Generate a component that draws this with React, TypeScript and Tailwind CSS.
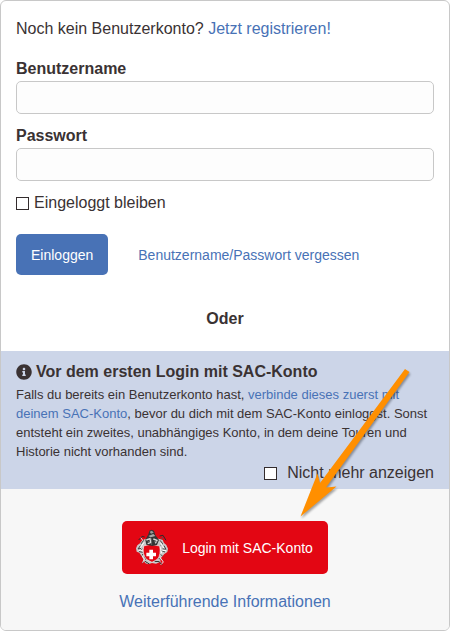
import type { ReactNode } from "react";
import { FaInfoCircle } from "react-icons/fa";

type TextFieldProps = {
  readonly id: string;
  readonly label: string;
  readonly type: "text" | "password";
};

function TextField({ id, label, type }: TextFieldProps) {
  return (
    <div className="flex flex-col">
      <label htmlFor={id} className="font-bold">
        {label}
      </label>
      <input
        id={id}
        type={type}
        className="h-[33px] w-full rounded-[5px] border border-[#c8c8c8] bg-[#fdfdfd] px-3"
      />
    </div>
  );
}

type CheckboxProps = {
  readonly id: string;
  readonly className: string;
  readonly children: ReactNode;
};

function Checkbox({ id, className, children }: CheckboxProps) {
  return (
    <div className={`flex items-center ${className}`}>
      <input
        id={id}
        type="checkbox"
        className="size-[13px] shrink-0 appearance-none border border-[#332c2d] bg-white checked:bg-[#4872b6]"
      />
      <label htmlFor={id}>{children}</label>
    </div>
  );
}

function Crest() {
  return (
    <svg viewBox="0 0 132 132" className="size-11" aria-hidden="true">
      {/* ice axe and rope behind the shield */}
      <path d="M31 34 L94 112" stroke="#eee" strokeWidth="3" />
      <path d="M101 31 L36 112" stroke="#555" strokeWidth="3" />
      <path d="M26 42 L36 31 L44 33 M89 30 L99 28 L108 43" stroke="#2b2b2b" strokeWidth="3" fill="none" />
      {/* fur and mantling */}
      <path
        d="M45 39 L35 45 L30 52 L22 58 L18 67 L20 77 L28 80 L35 91 L41 101 L45 111 L54 115 L66 111 L78 113 L90 108 L93 96 L103 84 L112 78 L114 68 L109 57 L102 51 L98 42 L86 38 Z"
        fill="#c9c9c9"
      />
      <path
        d="M41 43 L34 52 L39 57 M31 59 L24 69 L33 67 M38 68 L28 77 L38 79 M39 84 L33 92 M44 91 L47 101 M90 43 L98 53 L92 58 M102 59 L108 70 L98 68 M94 74 L105 78 M92 85 L98 91 M84 94 L91 101"
        stroke="#444"
        strokeWidth="3"
        fill="none"
      />
      <path
        d="M42 49 L31 65 M36 73 L26 73 M42 59 L38 76 M91 50 L102 67 M97 74 L108 73 M90 62 L95 82"
        stroke="#fff"
        strokeWidth="3"
        fill="none"
      />
      {/* shield */}
      <path
        d="M41 60 L61 55 L89 60 Q94 86 82 100 L66 109 L49 100 Q36 84 41 60 Z"
        fill="#e30613"
        stroke="#e9e9e9"
        strokeWidth="2"
      />
      <path d="M58 71 h11 v9 h9 v11 h-9 v9 h-11 v-9 h-9 v-11 h9 Z" fill="#fff" />
      {/* helmet */}
      <path d="M46 42 L55 25 L58 14 L65 11 L72 14 L76 27 L87 42 L81 57 L67 60 L49 56 Z" fill="#343434" />
      <path d="M55 30 L70 24 L76 30 L62 34 Z" fill="#a9a9a9" />
      <path d="M59 17 L66 14 L71 20 L63 23 Z" fill="#999" />
      <path d="M49 42 L60 38 L62 50 L53 53 M70 39 L81 43 L76 52" stroke="#d9d9d9" strokeWidth="4" fill="none" />
      <path d="M64 37 L65 57 M53 46 L59 47 M72 47 L82 47" stroke="#777" strokeWidth="2" fill="none" />
      {/* rope ends */}
      <path d="M35 88 L43 99 L38 110 M90 94 L100 108 L92 117" stroke="#ededed" strokeWidth="3" fill="none" />
      <path d="M45 106 L58 114 M74 106 L88 107 L96 116" stroke="#303030" strokeWidth="3" fill="none" />
    </svg>
  );
}

function Arrow() {
  return (
    <svg
      viewBox="0 0 118 156"
      className="pointer-events-none absolute top-[365px] right-[35px] h-[156px] w-[118px] drop-shadow-[1px_2px_1px_rgba(0,0,0,0.35)]"
      aria-hidden="true"
    >
      <path d="M109 3 L113.500 6 L30 121.500 L40.500 120.500 L4.500 150.500 L21.500 107.500 L24 117 Z" fill="#ff8f00" />
    </svg>
  );
}

export default function App() {
  return (
    <main className="relative overflow-hidden rounded-md border border-[#c8c8c8] bg-white font-['Liberation_Sans',Arial,sans-serif] text-base text-[#3a3233]">
      <form className="px-[15px] pt-4 pb-5" onSubmit={(event) => event.preventDefault()}>
        <p>
          Noch kein Benutzerkonto?{" "}
          <a href="#registrieren" className="text-[#4872b6]">
            Jetzt registrieren!
          </a>
        </p>

        <div className="mt-4 flex flex-col gap-[10px]">
          <TextField id="username" label="Benutzername" type="text" />
          <TextField id="password" label="Passwort" type="password" />
          <Checkbox id="remember" className="gap-[5px]">
            Eingeloggt bleiben
          </Checkbox>
        </div>

        <div className="mt-[19px] flex items-center gap-[30px] text-sm">
          <button type="submit" className="h-[41px] rounded-[5px] bg-[#4872b6] px-[15px] text-white">
            Einloggen
          </button>
          <a href="#vergessen" className="text-[#4872b6]">
            Benutzername/Passwort vergessen
          </a>
        </div>

        <p className="mt-8 text-center font-bold">Oder</p>
      </form>

      <section className="bg-[#ccd5e8] px-[15px] pt-[9px] pb-1">
        <h2 className="flex items-center gap-1 font-bold">
          <FaInfoCircle className="size-4" aria-hidden="true" />
          Vor dem ersten Login mit SAC-Konto
        </h2>
        <p className="mt-px text-[13px] leading-[19px]">
          Falls du bereits ein Benutzerkonto hast,{" "}
          <a href="#verbinden" className="text-[#4872b6]">
            verbinde dieses zuerst mit deinem SAC-Konto
          </a>
          , bevor du dich mit dem SAC-Konto einloggst. Sonst entsteht ein zweites, unabhängiges
          Konto, in dem deine Touren und Historie nicht vorhanden sind.
        </p>
        <Checkbox id="hide-notice" className="justify-end gap-[10px]">
          Nicht mehr anzeigen
        </Checkbox>
      </section>

      <section className="flex flex-col items-center gap-4 bg-[#f7f7f7] pt-8 pb-4">
        <button
          type="button"
          className="flex h-[53px] items-center gap-2 rounded-[5px] bg-[#e30613] px-[15px] pl-2 text-sm text-white"
        >
          <Crest />
          Login mit SAC-Konto
        </button>
        <a href="#informationen" className="text-[#4872b6]">
          Weiterführende Informationen
        </a>
      </section>

      <Arrow />
    </main>
  );
}
